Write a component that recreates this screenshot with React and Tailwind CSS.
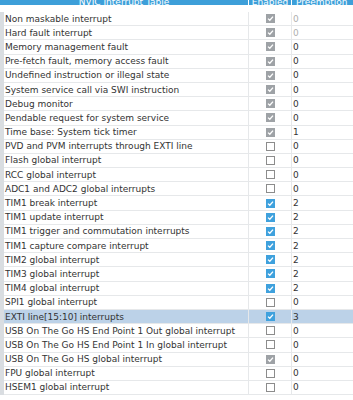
import React from "react";

const rows = [
  ["Non maskable interrupt", "d", "0", true],
  ["Hard fault interrupt", "d", "0", true],
  ["Memory management fault", "d", "0"],
  ["Pre-fetch fault, memory access fault", "d", "0"],
  ["Undefined instruction or illegal state", "d", "0"],
  ["System service call via SWI instruction", "d", "0"],
  ["Debug monitor", "d", "0"],
  ["Pendable request for system service", "d", "0"],
  ["Time base: System tick timer", "d", "1"],
  ["PVD and PVM interrupts through EXTI line", "u", "0"],
  ["Flash global interrupt", "u", "0"],
  ["RCC global interrupt", "u", "0"],
  ["ADC1 and ADC2 global interrupts", "u", "0"],
  ["TIM1 break interrupt", "c", "2"],
  ["TIM1 update interrupt", "c", "2"],
  ["TIM1 trigger and commutation interrupts", "c", "2"],
  ["TIM1 capture compare interrupt", "c", "2"],
  ["TIM2 global interrupt", "c", "2"],
  ["TIM3 global interrupt", "c", "2"],
  ["TIM4 global interrupt", "c", "2"],
  ["SPI1 global interrupt", "u", "0"],
  ["EXTI line[15:10] interrupts", "c", "3", false, true],
  ["USB On The Go HS End Point 1 Out global interrupt", "u", "0"],
  ["USB On The Go HS End Point 1 In global interrupt", "u", "0"],
  ["USB On The Go HS global interrupt", "d", "0"],
  ["FPU global interrupt", "u", "0"],
  ["HSEM1 global interrupt", "u", "0"],
];

function Check({ kind }) {
  if (kind === "u") {
    return <div className="w-[9px] h-[9px] border border-[#8c8c8c] bg-white" />;
  }
  const bg = kind === "c" ? "bg-[#3fa1dd]" : "bg-[#9ea2a6]";
  return (
    <div className={`w-[9px] h-[9px] ${bg} flex items-center justify-center`}>
      <svg width="7" height="7" viewBox="0 0 7 7">
        <path d="M1 3.6 L2.8 5.3 L6 1.6" stroke="white" strokeWidth="1.3" fill="none" />
      </svg>
    </div>
  );
}

export default function App() {
  return (
    <div
      className="w-[353px] h-[400px] overflow-hidden bg-white text-[#333333]"
      style={{ fontFamily: '"DejaVu Sans", sans-serif' }}
    >
      <div className="flex h-[5px] bg-[#3d9fd9] text-white text-[9px] leading-[9px] overflow-hidden">
        <div className="w-[249px] border-r border-white flex justify-center items-end">
          <span className="-mb-[2px]">NVIC Interrupt Table</span>
        </div>
        <div className="w-[43px] border-r border-white flex justify-center items-end">
          <span className="-mb-[2px]">Enabled</span>
        </div>
        <div className="flex-1 flex justify-start pl-[4px] items-end whitespace-nowrap">
          <span className="-mb-[2px]">Preemption</span>
        </div>
      </div>
      <div className="h-[7px]" />
      <div className="flex flex-col border-l-[4px] border-[#d9dde1]">
        {rows.map(([name, kind, val, dim, sel], i) => (
          <div
            key={i}
            className={`flex h-[14.2px] text-[9px] leading-[13px] border-b border-[#e6e8ea] ${sel ? "bg-[#bcd2e8]" : ""}`}
          >
            <div className="w-[245px] pl-[1px] pt-[1px] overflow-hidden whitespace-nowrap border-r border-[#e6e8ea] flex items-center">
              {name}
            </div>
            <div className="w-[43px] border-r border-[#e6e8ea] flex items-center justify-center">
              <Check kind={kind} />
            </div>
            <div className={`flex-1 pl-[1px] pt-[1px] flex items-center ${dim ? "text-[#b0b0b0]" : ""}`}>
              {val}
            </div>
          </div>
        ))}
      </div>
    </div>
  );
}
